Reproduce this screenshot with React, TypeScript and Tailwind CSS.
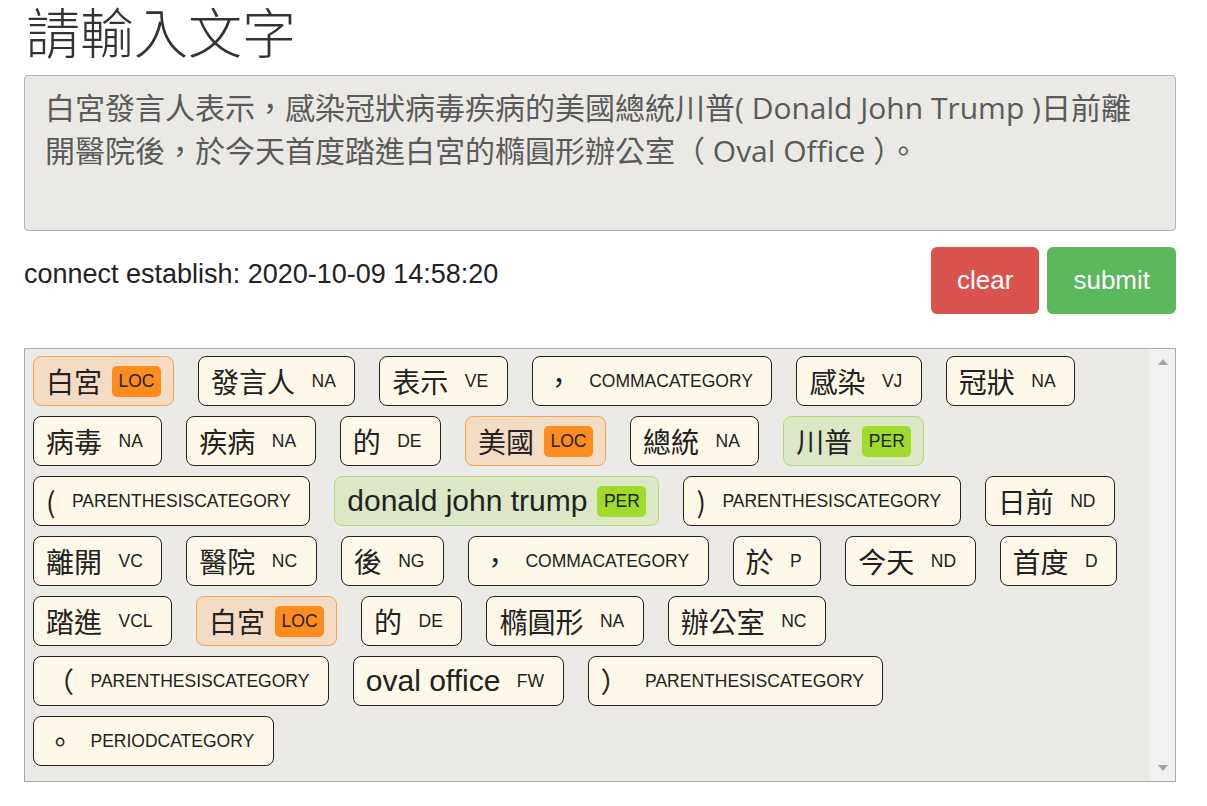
type Token = { word: string; tag: string; ent?: "LOC" | "PER" };

const tokens: Token[] = [
  { word: "白宮", tag: "LOC", ent: "LOC" },
  { word: "發言人", tag: "NA" },
  { word: "表示", tag: "VE" },
  { word: "，", tag: "COMMACATEGORY" },
  { word: "感染", tag: "VJ" },
  { word: "冠狀", tag: "NA" },
  { word: "病毒", tag: "NA" },
  { word: "疾病", tag: "NA" },
  { word: "的", tag: "DE" },
  { word: "美國", tag: "LOC", ent: "LOC" },
  { word: "總統", tag: "NA" },
  { word: "川普", tag: "PER", ent: "PER" },
  { word: "(", tag: "PARENTHESISCATEGORY" },
  { word: "donald john trump", tag: "PER", ent: "PER" },
  { word: ")", tag: "PARENTHESISCATEGORY" },
  { word: "日前", tag: "ND" },
  { word: "離開", tag: "VC" },
  { word: "醫院", tag: "NC" },
  { word: "後", tag: "NG" },
  { word: "，", tag: "COMMACATEGORY" },
  { word: "於", tag: "P" },
  { word: "今天", tag: "ND" },
  { word: "首度", tag: "D" },
  { word: "踏進", tag: "VCL" },
  { word: "白宮", tag: "LOC", ent: "LOC" },
  { word: "的", tag: "DE" },
  { word: "橢圓形", tag: "NA" },
  { word: "辦公室", tag: "NC" },
  { word: "（", tag: "PARENTHESISCATEGORY" },
  { word: "oval office", tag: "FW" },
  { word: "）", tag: "PARENTHESISCATEGORY" },
  { word: "。", tag: "PERIODCATEGORY" },
];

const chipStyles = {
  LOC: "border-[#f2a54e] bg-[#f3dcc3]",
  PER: "border-[#b4dc7e] bg-[#dce8c5]",
  none: "border-[#222] bg-[#fdf8e7]",
};

const badgeStyles = {
  LOC: "rounded-[5px] bg-[#fb8c1d]",
  PER: "rounded-[5px] bg-[#9fda2c]",
  none: "",
};

function TokenChip({ token }: { token: Token }) {
  const kind = token.ent ?? "none";
  const isLatin = /^[a-z ]+$/.test(token.word);

  return (
    <div
      className={`flex h-[50px] items-center gap-[10px] rounded-[8px] border px-[12px] ${chipStyles[kind]}`}
    >
      <span
        className={
          isLatin
            ? "text-[30px] leading-none text-[#222] [font-family:'Liberation_Sans',sans-serif]"
            : "text-[28px] leading-none text-[#222] [font-family:'Noto_Sans_CJK_TC',sans-serif]"
        }
      >
        {token.word}
      </span>
      <span
        className={`flex h-[31px] items-center px-[6.5px] text-[17.5px] text-[#222] [font-family:'Liberation_Sans',sans-serif] ${badgeStyles[kind]}`}
      >
        {token.tag}
      </span>
    </div>
  );
}

export default function App() {
  return (
    <div lang="zh-TW" className="min-h-[806px] bg-white pl-[24px]">
      <div className="w-[1152px]">
        <h1 className="pl-[2px] text-[54px] font-light leading-[62px] text-[#333] [font-family:'Noto_Sans_CJK_TC',sans-serif]">
          請輸入文字
        </h1>

        <div className="mt-[13px] h-[156px] rounded-[4px] border border-[#b0b0b0] bg-[#ebe9e5] px-[20px] pt-[10px] text-[30px] leading-[43px] text-[#5a5a5a] [font-family:'Open_Sans','Noto_Sans_CJK_TC',sans-serif]">
          白宮發言人表示，感染冠狀病毒疾病的美國總統川普( Donald John Trump )日前離
          <br />
          開醫院後，於今天首度踏進白宮的橢圓形辦公室（ Oval Office ）。
        </div>

        <div className="mt-[16px] flex items-start justify-between">
          <p className="mt-[9px] text-[27px] leading-[36px] text-[#222] [font-family:'Liberation_Sans',sans-serif]">
            connect establish: 2020-10-09 14:58:20
          </p>
          <div className="flex gap-[8px] [font-family:'Liberation_Sans',sans-serif]">
            <button className="h-[67px] rounded-[6px] bg-[#d9534f] px-[26px] text-[26px] text-white">
              clear
            </button>
            <button className="h-[67px] rounded-[6px] bg-[#5cb85c] px-[26px] text-[26px] text-white">
              submit
            </button>
          </div>
        </div>

        <div className="mt-[34px] flex h-[434px] border border-[#a9a9a9] bg-[#ebeae6]">
          <div className="flex flex-1 flex-wrap content-start gap-x-[24px] gap-y-[10px] pl-[8px] pr-[18px] pt-[7px]">
            {tokens.map((token, i) => (
              <TokenChip key={i} token={token} />
            ))}
          </div>
          <div className="flex w-[25px] flex-col items-center justify-between bg-[#f1f1f1] py-[10px]">
            <div className="h-0 w-0 border-x-[5px] border-b-[6px] border-x-transparent border-b-[#a3a3a3]" />
            <div className="h-0 w-0 border-x-[5px] border-t-[6px] border-x-transparent border-t-[#a3a3a3]" />
          </div>
        </div>
      </div>
    </div>
  );
}
